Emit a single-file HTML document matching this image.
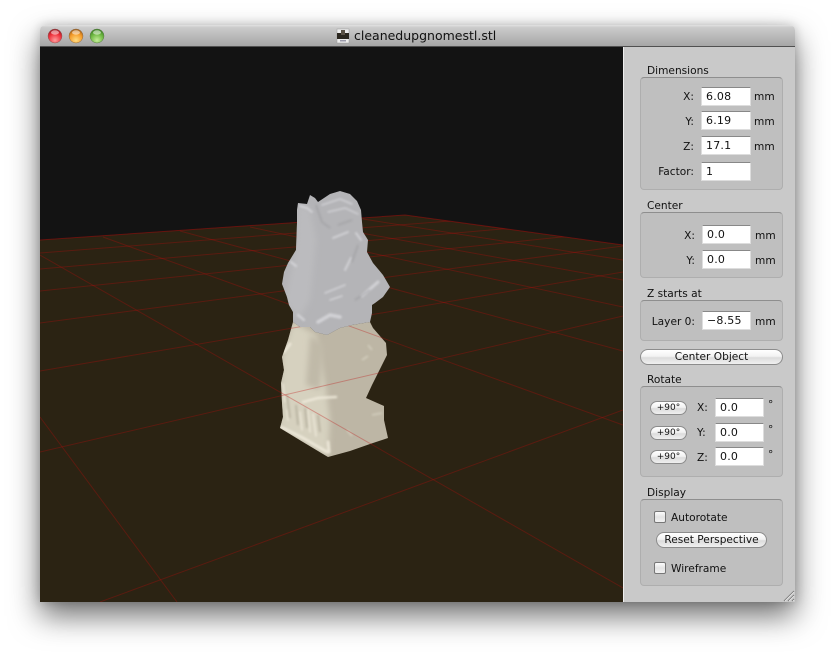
<!DOCTYPE html>
<html><head><meta charset="utf-8"><style>
html,body{margin:0;padding:0;background:#fff}
body{width:834px;height:657px;position:relative;overflow:hidden;font-family:"DejaVu Sans","Liberation Sans",sans-serif;font-size:10.6px;color:#111}
.win{position:absolute;left:40px;top:25px;width:755px;height:577px;border-radius:5px 5px 0 0;box-shadow:0 14px 30px rgba(0,0,0,.56),0 0 10px rgba(0,0,0,.18)}
.tb{position:absolute;left:40px;top:25px;width:755px;height:21px;border-radius:5px 5px 0 0;background:linear-gradient(#e2e2e2,#cbcbcb 12%,#a6a6a6);border-bottom:1px solid #505050}
.tt{position:absolute;left:354px;top:28px;font-size:12.5px;line-height:16px;color:#111;white-space:nowrap}
.panel{position:absolute;left:623px;top:47px;width:172px;height:555px;background:#c9c9c9;border-left:1px solid #eee;box-sizing:border-box}
.box{position:absolute;left:640px;width:143px;box-sizing:border-box;background:#bfbfbf;border:1px solid #aeaeae;border-top-color:#8e8e8e;border-radius:4px}
.t{position:absolute;line-height:14px;white-space:nowrap}
.r{text-align:right}
.f{position:absolute;box-sizing:border-box;background:#fff;border:1px solid #ddd;border-top:1px solid #888;height:19px;line-height:17px;padding-left:4px;font-size:11px;letter-spacing:.2px;color:#111}
.b{position:absolute;box-sizing:border-box;border:1px solid #8c8c8c;border-radius:9px;background:linear-gradient(#fff,#f2f2f2 45%,#dcdcdc 55%,#f0f0f0);text-align:center;white-space:nowrap;color:#111}
.c{position:absolute;width:12px;height:12px;box-sizing:border-box;border:1px solid #777;border-radius:2px;background:linear-gradient(#fdfdfd,#e4e4e4 50%,#f2f2f2)}
</style></head><body>
<div class="win"></div>
<div class="tb"></div>
<svg style="position:absolute;left:0;top:0" width="834" height="657">
<defs>
<radialGradient id="rd" cx=".5" cy=".8" r=".8"><stop offset="0" stop-color="#ff9c9c"/><stop offset=".6" stop-color="#ee2f3a"/><stop offset="1" stop-color="#8e1a22"/></radialGradient>
<radialGradient id="or" cx=".5" cy=".8" r=".8"><stop offset="0" stop-color="#ffdc80"/><stop offset=".6" stop-color="#f49a28"/><stop offset="1" stop-color="#96591a"/></radialGradient>
<radialGradient id="gr" cx=".5" cy=".8" r=".8"><stop offset="0" stop-color="#c4ee98"/><stop offset=".6" stop-color="#6cb640"/><stop offset="1" stop-color="#3a7a24"/></radialGradient>
<filter id="b1" x="-20%" y="-20%" width="140%" height="140%"><feGaussianBlur stdDeviation="1"/></filter>
<filter id="b2" x="-20%" y="-20%" width="140%" height="140%"><feGaussianBlur stdDeviation="3"/></filter>
<clipPath id="fl"><path d="M40,240L405,215L623,245V602H40Z"/></clipPath>
<clipPath id="up"><path d="M298,203L307,204L310,195L315,198L318,202L330,194L340,191L350,194L357,201L361,210L362,222L363,232L368,240L367,252L373,263L383,275L390,287L383,297L375,303L372,305L372,313L370,322L352,325L340,328L327,335L315,332L310,327L300,327L293,322L293,312L289,305L287,297L282,284L284,272L288,263L296,250L297,223L297,210Z"/></clipPath>
<clipPath id="lo"><path d="M293,322L288,340L282,357L284,370L281,383L282,403L283,417L280,428L303,442L328,457L350,451L370,444L388,438L384,420L384,406L366,398L372,385L377,375L387,355L386,343L373,328L370,322L352,325L340,328L327,335L315,332L310,327L300,327Z"/></clipPath>
</defs>
<circle cx="55" cy="36" r="7" fill="url(#rd)" stroke="#8a5a5a" stroke-width=".5"/><ellipse cx="55" cy="32.5" rx="4" ry="2.2" fill="#fff" opacity=".5"/>
<circle cx="76" cy="36" r="7" fill="url(#or)" stroke="#8a6a4a" stroke-width=".5"/><ellipse cx="76" cy="32.5" rx="4" ry="2.2" fill="#fff" opacity=".5"/>
<circle cx="97" cy="36" r="7" fill="url(#gr)" stroke="#5a7a4a" stroke-width=".5"/><ellipse cx="97" cy="32.5" rx="4" ry="2.2" fill="#fff" opacity=".5"/>
<rect x="337" y="29" width="12" height="14" fill="#eee" stroke="#999" stroke-width=".5"/>
<rect x="337" y="33" width="12" height="6" fill="#2c2820"/><rect x="341" y="30" width="4" height="5" fill="#5a5246"/>
<rect x="340" y="40" width="6" height="1.5" fill="#9a9aaa"/>

<rect x="40" y="47" width="583" height="555" fill="#131313"/>
<path d="M40,240L405,215L623,245V602H40Z" fill="#2b2313"/>

<g clip-path="url(#lo)">
<rect x="270" y="315" width="130" height="150" fill="#bdb6a5"/>
<path d="M293,322L282,357L281,383L280,428L328,457L330,420L326,390L316,335Z" fill="#d6d1bf" filter="url(#b2)"/>
<path d="M310,335L306,385L320,390L324,345Z" fill="#c0b9a8" filter="url(#b2)"/>
<g fill="none" stroke="#efeadb" stroke-linecap="round" filter="url(#b1)" opacity=".9">
<path d="M281,427L303,438L327,452" stroke-width="3"/>
<path d="M303,402L318,398L336,397" stroke-width="2.5"/>
<path d="M284,352L290,344" stroke-width="3"/>
<path d="M283,384L285,402M287,410L288,420M300,412L302,430M308,410L310,432M313,414L316,436" stroke-width="1.6"/>
<path d="M328,442L329,452" stroke-width="3"/>
</g>
<g fill="none" stroke="#8d8776" stroke-width="1.2" filter="url(#b1)" opacity=".6">
<path d="M287,395L290,418M296,405L298,425M305,408L307,428M318,415L320,432"/>
</g>
<path d="M372,415L382,413M347,430L352,436M368,345L372,350M362,360L368,356" stroke="#d8d3c2" stroke-width="2" filter="url(#b1)" opacity=".7"/>
</g>

<g fill="none" stroke="#be0c0c" stroke-opacity=".32" stroke-width="1" clip-path="url(#fl)">
<path d="M40,253L450,221"/>
<path d="M40,269L560,224"/>
<path d="M40,291L610,232"/>
<path d="M40,323L623,246"/>
<path d="M40,371L623,272"/>
<path d="M40,452L623,316"/>
<path d="M100,602L623,410"/>
<path d="M40,255L623,588"/>
<path d="M40,417L177,602"/>
<path d="M103,237L623,425"/>
<path d="M180,231L623,351"/>
<path d="M250,227L623,307"/>
<path d="M300,222L623,280"/>
<path d="M363,219L623,260"/>
</g>
<path d="M40,240L405,215L623,245" fill="none" stroke="#be0c0c" stroke-opacity=".45"/>

<g clip-path="url(#up)">
<rect x="275" y="185" width="125" height="155" fill="#b4b4b7"/>
<path d="M298,205L310,208L316,240L310,300L298,320L285,300L296,250Z" fill="#bbbbbe" filter="url(#b2)"/>
<g fill="none" stroke="#d8d8dc" stroke-linecap="round" filter="url(#b1)" opacity=".85">
<path d="M300,206L307,208L312,212" stroke-width="2"/>
<path d="M322,205L340,199L352,204M328,212L345,208L358,214" stroke-width="1.5"/>
<path d="M333,238L348,232M356,233L361,240" stroke-width="2"/>
<path d="M345,270L351,258" stroke-width="2"/>
<path d="M291,262L296,266M298,315L304,320" stroke-width="2.4"/>
<path d="M325,293L345,285M330,300L342,296" stroke-width="1.6"/>
<path d="M362,296L378,282" stroke-width="3"/>
<path d="M318,322L330,315L340,317" stroke-width="3.5"/>
</g>
<g fill="none" stroke="#949498" stroke-width="1.4" filter="url(#b1)" opacity=".6">
<path d="M316,205L322,222L330,228M352,220L338,225M352,262L358,245M355,300L370,290"/>
</g>
</g>
</svg>
<div class="tt">cleanedupgnomestl.stl</div>
<div class="panel"></div>

<div class="t" style="left:647px;top:64px">Dimensions</div>
<div class="box" style="top:77px;height:113px"></div>
<div class="t r" style="left:640px;width:54px;top:90px">X:</div><div class="f" style="left:701px;top:87px;width:50px">6.08</div><div class="t" style="left:754px;top:90px">mm</div>
<div class="t r" style="left:640px;width:54px;top:115px">Y:</div><div class="f" style="left:701px;top:111px;width:50px">6.19</div><div class="t" style="left:754px;top:115px">mm</div>
<div class="t r" style="left:640px;width:54px;top:140px">Z:</div><div class="f" style="left:701px;top:136px;width:50px">17.1</div><div class="t" style="left:754px;top:140px">mm</div>
<div class="t r" style="left:640px;width:54px;top:165px">Factor:</div><div class="f" style="left:701px;top:162px;width:50px">1</div>

<div class="t" style="left:647px;top:199px">Center</div>
<div class="box" style="top:212px;height:66px"></div>
<div class="t r" style="left:640px;width:55px;top:229px">X:</div><div class="f" style="left:702px;top:225px;width:49px">0.0</div><div class="t" style="left:755px;top:229px">mm</div>
<div class="t r" style="left:640px;width:55px;top:254px">Y:</div><div class="f" style="left:702px;top:250px;width:49px">0.0</div><div class="t" style="left:755px;top:254px">mm</div>

<div class="t" style="left:647px;top:287px">Z starts at</div>
<div class="box" style="top:300px;height:41px"></div>
<div class="t r" style="left:640px;width:55px;top:315px">Layer 0:</div><div class="f" style="left:702px;top:311px;width:49px">−8.55</div><div class="t" style="left:755px;top:315px">mm</div>

<div class="b" style="left:640px;top:349px;width:143px;height:16px;line-height:15px">Center Object</div>

<div class="t" style="left:647px;top:373px">Rotate</div>
<div class="box" style="top:386px;height:91px"></div>
<div class="b" style="left:650px;top:401px;width:37px;height:14px;line-height:12px;font-size:9px">+90°</div><div class="t" style="left:697px;top:401px">X:</div><div class="f" style="left:715px;top:398px;width:49px">0.0</div><div class="t" style="left:768px;top:398px">°</div>
<div class="b" style="left:650px;top:426px;width:37px;height:14px;line-height:12px;font-size:9px">+90°</div><div class="t" style="left:697px;top:426px">Y:</div><div class="f" style="left:715px;top:423px;width:49px">0.0</div><div class="t" style="left:768px;top:423px">°</div>
<div class="b" style="left:650px;top:450px;width:37px;height:14px;line-height:12px;font-size:9px">+90°</div><div class="t" style="left:697px;top:451px">Z:</div><div class="f" style="left:715px;top:447px;width:49px">0.0</div><div class="t" style="left:768px;top:448px">°</div>

<div class="t" style="left:647px;top:486px">Display</div>
<div class="box" style="top:499px;height:87px"></div>
<div class="c" style="left:654px;top:511px"></div><div class="t" style="left:671px;top:511px">Autorotate</div>
<div class="b" style="left:656px;top:532px;width:111px;height:16px;line-height:15px">Reset Perspective</div>
<div class="c" style="left:654px;top:562px"></div><div class="t" style="left:671px;top:562px">Wireframe</div>

<svg style="position:absolute;left:782px;top:589px" width="13" height="13"><path d="M2,12L12,2M6,12L12,6M10,12L12,10" stroke="#777" stroke-width="1"/><path d="M3,12L12,3M7,12L12,7M11,12L12,11" stroke="#f0f0f0" stroke-width=".7"/></svg>
</body></html>
